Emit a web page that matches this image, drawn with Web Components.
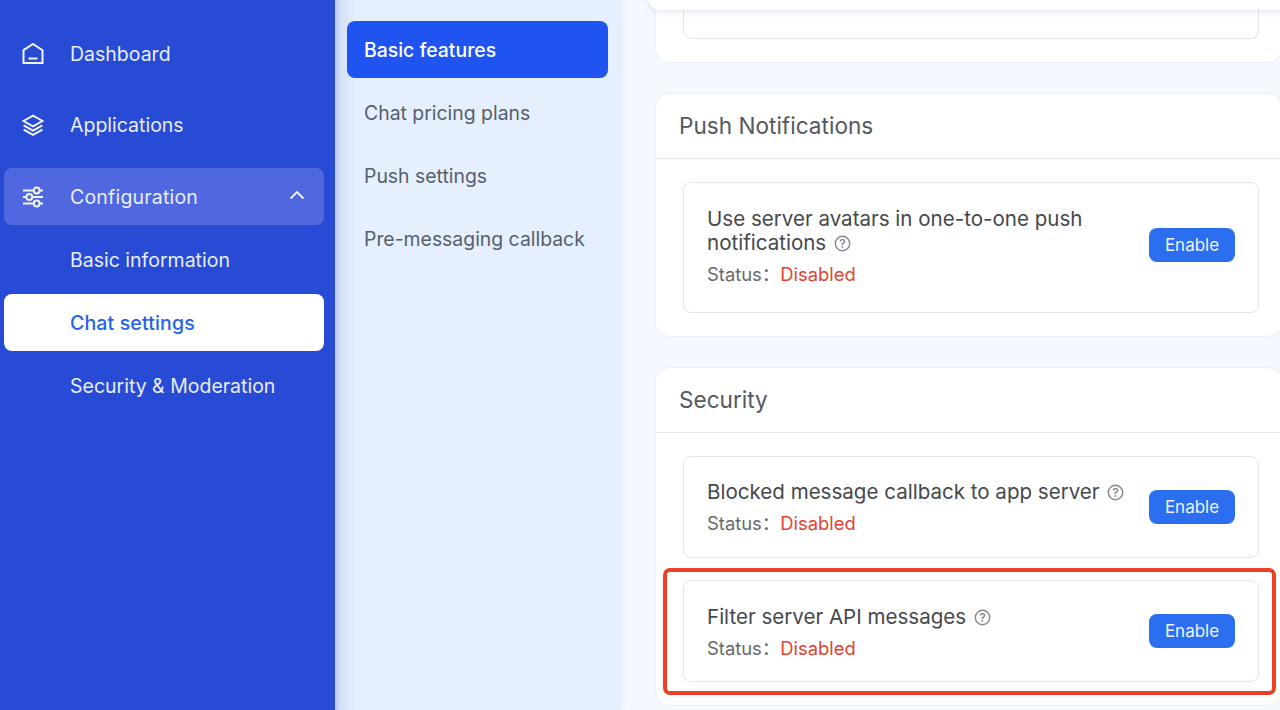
<!DOCTYPE html>
<html>
<head>
<meta charset="utf-8">
<style>
html,body{margin:0;height:100%;overflow:hidden}
body{font-family:"Inter","Noto Sans CJK SC","Liberation Sans",sans-serif}
</style>
</head>
<body>
<app-shell>
    <side-bar slot="side">
        <nav-item icon="home">Dashboard</nav-item>
        <nav-item icon="layers">Applications</nav-item>
        <nav-item icon="sliders" state="open">Configuration</nav-item>
        <div slot="children">
            <nav-item child>Basic information</nav-item>
            <nav-item child state="current">Chat settings</nav-item>
            <nav-item child>Security &amp; Moderation</nav-item>
        </div>
    </side-bar>
    <sub-menu slot="sub">
        <sub-item active>Basic features</sub-item>
        <sub-item>Chat pricing plans</sub-item>
        <sub-item>Push settings</sub-item>
        <sub-item>Pre-messaging callback</sub-item>
    </sub-menu>
    <settings-view slot="main">
        <panel-card cut></panel-card>
        <panel-card title="Push Notifications">
            <setting-row tall>Use server avatars in one-to-one push notifications</setting-row>
        </panel-card>
        <panel-card title="Security">
            <setting-row>Blocked message callback to app server</setting-row>
            <setting-row marked>Filter server API messages</setting-row>
        </panel-card>
    </settings-view>
</app-shell>

<script>
const shellTemplate = document.createElement('template')
shellTemplate.innerHTML = `
    <style>
        :host{
            display: flex;
            width: 1280px;
            height: 710px;
            overflow: hidden;
            background: #f5f8ff;
        }
    </style>
    <slot name="side"></slot>
    <slot name="sub"></slot>
    <slot name="main"></slot>
`
class AppShell extends HTMLElement{
    constructor(){
        super()
        this.attachShadow({mode: "open"})
        this.shadowRoot.appendChild(shellTemplate.content.cloneNode(true))
    }
}
customElements.define('app-shell', AppShell)

const sideTemplate = document.createElement('template')
sideTemplate.innerHTML = `
    <style>
        :host{
            display: block;
            flex: none;
            width: 335px;
            height: 710px;
            box-sizing: border-box;
            padding: 25px 11px 0 4px;
            background: #274bd4;
        }
        .top{
            display: flex;
            flex-direction: column;
            gap: 14.5px;
        }
        ::slotted([slot="children"]){
            display: flex;
            flex-direction: column;
            gap: 6px;
            margin-top: 6px;
        }
    </style>
    <div class="top"><slot></slot></div>
    <slot name="children"></slot>
`
class SideBar extends HTMLElement{
    constructor(){
        super()
        this.attachShadow({mode: "open"})
        this.shadowRoot.appendChild(sideTemplate.content.cloneNode(true))
    }
}
customElements.define('side-bar', SideBar)

const navIcons = {
    home: '<path d="M1.5 7.2 11 1l9.5 6.2V20H1.5z"/><path d="M6.5 15.5h9"/>',
    layers: '<path d="M11 1.6 20.6 7 11 12.4 1.4 7z"/><path d="M1.6 11.4 11 16.6l9.4-5.2"/><path d="M1.6 15.6 11 20.8l9.4-5.2"/>',
    sliders: '<path d="M1 4.5h10.8M17.6 4.5H21M1 11h3.4M10.2 11H21M1 17.5h10.8M17.6 17.5H21"/><circle cx="14.7" cy="4.5" r="2.9"/><circle cx="7.3" cy="11" r="2.9"/><circle cx="14.7" cy="17.5" r="2.9"/>'
}
const navTemplate = document.createElement('template')
navTemplate.innerHTML = `
    <style>
        :host{
            display: flex;
            align-items: center;
            height: 57px;
            padding: 0 19px 0 18px;
            border-radius: 8px;
            font-size: 19.5px;
            font-variant-ligatures: none;
            color: #e9edfb;
            box-sizing: border-box;
        }
        :host([state="open"]){
            background: #4f68df;
            letter-spacing: 0.2px;
        }
        :host([state="current"]){
            background: #fff;
            color: #2463eb;
            font-weight: 500;
            letter-spacing: 0.15px;
        }
        :host([child]){
            padding-left: 66px;
        }
        svg{
            width: 22px;
            height: 22px;
            flex: none;
            margin-right: 26px;
            fill: none;
            stroke: #f2f4fd;
            stroke-width: 2;
        }
        .icon{
            display: none;
        }
        .text{
            flex: 1;
        }
        .tail{
            display: flex;
            margin-top: -3px;
        }
        .chevron{
            width: 16px;
            height: 10px;
            margin: 0;
            stroke-width: 1.8;
        }
    </style>
    <span class="icon"></span>
    <span class="text"><slot></slot></span>
    <span class="tail"></span>
`
class NavItem extends HTMLElement{
    constructor(){
        super()
        this.attachShadow({mode: "open"})
        this.shadowRoot.appendChild(navTemplate.content.cloneNode(true))
    }
    connectedCallback(){
        const icon = this.shadowRoot.querySelector('.icon')
        const name = this.getAttribute('icon')
        if (name){
            icon.style.display = 'flex'
            icon.innerHTML = '<svg viewBox="0 0 22 22">' + navIcons[name] + '</svg>'
        }
        if (this.getAttribute('state') == 'open')
            this.shadowRoot.querySelector('.tail').innerHTML = '<svg class="chevron" viewBox="0 0 16 10"><path d="M1.5 8.5 8 2l6.5 6.5"/></svg>'
    }
}
customElements.define('nav-item', NavItem)

const subMenuTemplate = document.createElement('template')
subMenuTemplate.innerHTML = `
    <style>
        :host{
            display: flex;
            flex-direction: column;
            gap: 6px;
            flex: none;
            width: 287px;
            height: 710px;
            box-sizing: border-box;
            padding: 21px 14px 0 12px;
            background: linear-gradient(90deg, #b9c8f0 0, #d5e0f8 6px, #e6effd 22px);
            box-shadow: 2px 0 6px rgba(120, 140, 190, 0.08);
        }
    </style>
    <slot></slot>
`
class SubMenu extends HTMLElement{
    constructor(){
        super()
        this.attachShadow({mode: "open"})
        this.shadowRoot.appendChild(subMenuTemplate.content.cloneNode(true))
    }
}
customElements.define('sub-menu', SubMenu)

const subItemTemplate = document.createElement('template')
subItemTemplate.innerHTML = `
    <style>
        :host{
            display: flex;
            align-items: center;
            height: 57px;
            padding-left: 17px;
            border-radius: 8px;
            font-size: 19.4px;
            font-variant-ligatures: none;
            color: #555f6e;
            box-sizing: border-box;
        }
        :host([active]){
            background: #1f54f1;
            color: #fff;
            font-weight: 500;
        }
    </style>
    <slot></slot>
`
class SubItem extends HTMLElement{
    constructor(){
        super()
        this.attachShadow({mode: "open"})
        this.shadowRoot.appendChild(subItemTemplate.content.cloneNode(true))
    }
}
customElements.define('sub-item', SubItem)

const viewTemplate = document.createElement('template')
viewTemplate.innerHTML = `
    <style>
        :host{
            display: block;
            position: relative;
            flex: none;
            width: 658px;
            height: 710px;
            box-sizing: border-box;
            padding: 0 0 0 33px;
            overflow: hidden;
        }
        .stack{
            display: flex;
            flex-direction: column;
            gap: 30px;
            width: 627px;
        }
        /* sticky page header, only its lower edge is still in view */
        .sticky{
            position: absolute;
            left: 26px;
            top: -40px;
            width: 700px;
            height: 50px;
            background: #fff;
            border-radius: 12px;
            box-shadow: 0 2px 6px rgba(120, 130, 170, 0.18);
        }
    </style>
    <div class="stack"><slot></slot></div>
    <div class="sticky"></div>
`
class SettingsView extends HTMLElement{
    constructor(){
        super()
        this.attachShadow({mode: "open"})
        this.shadowRoot.appendChild(viewTemplate.content.cloneNode(true))
    }
}
customElements.define('settings-view', SettingsView)

const cardTemplate = document.createElement('template')
cardTemplate.innerHTML = `
    <style>
        :host{
            display: block;
            background: #fff;
            border: 1px solid #eaeef7;
            border-radius: 14px;
            box-sizing: border-box;
        }
        :host([cut]){
            height: 63px;
            border-top: 0;
            border-radius: 0 0 14px 14px;
            padding: 0 22px 0 27px;
        }
        :host([cut]) header{
            display: none;
        }
        :host([cut]) .body{
            height: 39px;
            padding: 0;
            box-sizing: border-box;
            border: 1px solid #e3e4ec;
            border-top: 0;
            border-radius: 0 0 8px 8px;
        }
        header{
            height: 65px;
            display: flex;
            align-items: center;
            padding: 0 0 2px 23px;
            border-bottom: 1px solid #e6e8ef;
            box-sizing: border-box;
            font-size: 22.6px;
            color: #55585e;
        }
        .body{
            display: flex;
            flex-direction: column;
            gap: 22px;
            padding: 23px 22px 23px 27px;
        }
    </style>
    <header></header>
    <div class="body"><slot></slot></div>
`
class PanelCard extends HTMLElement{
    constructor(){
        super()
        this.attachShadow({mode: "open"})
        this.shadowRoot.appendChild(cardTemplate.content.cloneNode(true))
    }
    connectedCallback(){
        this.shadowRoot.querySelector('header').textContent = this.getAttribute('title') || ''
    }
}
customElements.define('panel-card', PanelCard)

const rowTemplate = document.createElement('template')
rowTemplate.innerHTML = `
    <style>
        :host{
            display: flex;
            align-items: center;
            position: relative;
            height: 102px;
            box-sizing: border-box;
            padding: 0 23px;
            background: #fff;
            border: 1px solid #e3e4ec;
            border-radius: 8px;
        }
        :host([tall]){
            height: 131px;
        }
        :host([tall]) button{
            margin-top: -6px;
        }
        .info{
            flex: 1;
            min-width: 0;
            padding-top: 1px;
        }
        :host([tall]) .info{
            padding: 0 0 2px;
        }
        :host([marked]) .info{
            padding-top: 3px;
        }
        .name{
            max-width: 430px;
            font-size: 20.55px;
            line-height: 24px;
            color: #45484d;
        }
        .hint{
            display: inline-block;
            width: 17px;
            height: 17px;
            margin-left: 2px;
            vertical-align: -2px;
            fill: none;
            stroke: #85888e;
        }
        .hint text{
            font: 600 12px "Inter", sans-serif;
            fill: #85888e;
            stroke: none;
        }
        .status{
            margin-top: 7px;
            font-size: 18.4px;
            line-height: 24px;
            color: #66696f;
        }
        .status b{
            font-weight: 400;
            color: #e5432f;
        }
        button{
            flex: none;
            width: 86px;
            height: 34px;
            padding: 0;
            border: 0;
            border-radius: 8px;
            background: #2b6eef;
            color: #eef3fe;
            font-family: inherit;
            font-size: 17px;
        }
        .mark{
            display: none;
            position: absolute;
            left: -21px;
            top: -13px;
            right: -18px;
            bottom: -14px;
            border: 4px solid #ec4026;
            border-radius: 7px;
            pointer-events: none;
        }
        :host([marked]) .mark{
            display: block;
        }
    </style>
    <div class="info">
        <div class="name"><slot></slot> <svg class="hint" viewBox="0 0 17 17"><circle cx="8.5" cy="8.5" r="7.2" stroke-width="1.4"/><text x="8.5" y="12.8" text-anchor="middle">?</text></svg></div>
        <div class="status">Status：<b>Disabled</b></div>
    </div>
    <button>Enable</button>
    <div class="mark"></div>
`
class SettingRow extends HTMLElement{
    constructor(){
        super()
        this.attachShadow({mode: "open"})
        this.shadowRoot.appendChild(rowTemplate.content.cloneNode(true))
    }
}
customElements.define('setting-row', SettingRow)
</script>
</body>
</html>
